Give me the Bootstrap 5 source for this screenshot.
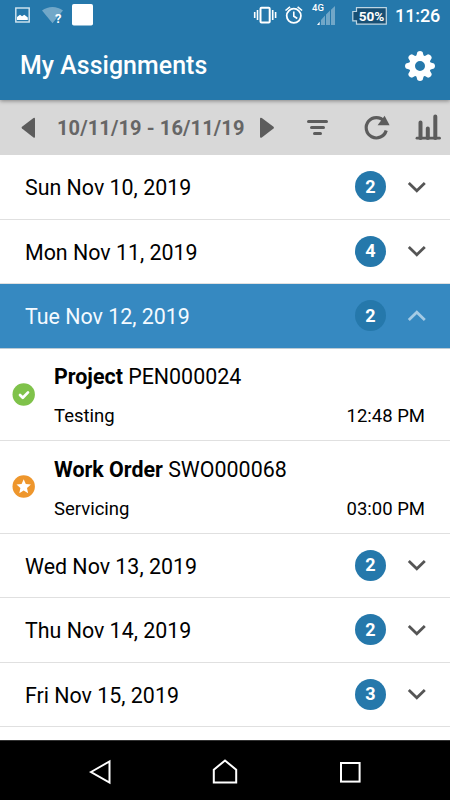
<!DOCTYPE html>
<html lang="en">
<head>
<meta charset="utf-8">
<meta name="viewport" content="width=device-width, initial-scale=1">
<title>My Assignments</title>
<link href="https://cdn.jsdelivr.net/npm/bootstrap@5.3.0/dist/css/bootstrap.min.css" rel="stylesheet">
<style>
body{font-family:Roboto,"Liberation Sans",sans-serif;color:#000;background:#fff;line-height:1}
.screen{width:450px;height:800px}
svg{display:block;flex:none}
.top-area{background:#2578ab;height:100px;z-index:2;box-shadow:0 1px 4px rgba(0,0,0,.4)}
.status{height:31px}
.signal{margin-left:12px}
.battery{font-size:13.6px;letter-spacing:-.1px;width:35px;height:18px;line-height:18px;padding-left:4px}
.battery svg{z-index:-1}
.net-type{font-size:9.5px;left:-4px;top:-1px}
.clock{font-size:18px;width:47px;letter-spacing:-.1px}
.title-bar{height:69px;padding:0 15px 0 20px}
.title-bar h1{font-size:24.9px;line-height:30px;letter-spacing:.05px}
.tools{height:55px;background:#d8d8d8;color:#5c5c5c}
.range{font-size:20px;color:#666;width:190px;letter-spacing:.12px;padding-top:1px}
.day{height:64.5px;padding:0 24px 0 25px;border-bottom:1.5px solid #e0e0e0;font-size:21.4px}
.day .date{padding-top:2px}
.day .count{width:31px;height:31px;background:#2578ab;font-size:18px;margin-right:21px}
.day .chev{color:#555}
.day.open{background:#3689c1;color:#f4faff;border-color:#bccbd5}
.day.open .chev{color:#a5cbe5}
.job{height:92.5px;border-bottom:1.5px solid #e0e0e0;padding:0 25px 0 12px}
.job svg{margin-right:19px}
.job-title{font-size:21.4px;line-height:28px;margin-top:14.6px}
.job-info{font-size:18.5px;line-height:24px;margin-top:13px}
.list-area{height:585px}
.sys-nav{height:60px;background:#000;border-top:1px solid #333}
</style>
<script src="https://cdn.jsdelivr.net/npm/bootstrap@5.3.0/dist/js/bootstrap.bundle.min.js"></script>
</head>
<body>
<div class="screen d-flex flex-column overflow-hidden">
  <header class="top-area position-relative text-white flex-shrink-0">
    <div class="status d-flex align-items-center">
      <svg width="100" height="31" fill="#fff">
        <rect x="15.800" y="8" width="13.400" height="14" fill="none" stroke="#d5e7f1" stroke-width="1.400"/>
        <path d="M17 20v-3l3-2.300 2 1.500 2.300-1.400 3.500 2.600V20z"/>
        <path d="M42 10.500C48 5.700 57 5.700 63 10.500L52.500 23.200z" opacity=".35"/>
        <rect x="72" y="4" width="21" height="21.600" rx="1.800"/>
        <text x="55" y="22.500" font-size="13" font-weight="700">?</text>
      </svg>
      <svg class="ms-auto" width="52" height="31" fill="none" stroke="#fff" stroke-width="1.600">
        <rect x="8.500" y="7.800" width="9.200" height="14.700" rx="1" stroke-width="2"/>
        <path d="M2.700 12v6M5.500 10v10M20.700 10v10M23.600 12v6"/>
        <circle cx="41.800" cy="15.800" r="7.100" stroke-width="1.800"/>
        <path d="M41.800 11.500v4.700l3.500 2.300M33.500 10.500l4.500-3.700M50.100 10.500l-4.500-3.700"/>
      </svg>
      <div class="signal position-relative">
        <svg width="20" height="31" fill="#fff"><path d="M1 25L3.600 21.700V25z"/><path d="M5 25V20l4-4.500V25zM10 25V14.500l4-4V25zM15 25V9.700l4-3.700V25z" opacity=".35"/></svg>
        <span class="net-type position-absolute fw-medium mt-1">4G</span>
      </div>
      <div class="battery position-relative z-1 text-center ms-3 fw-bold">
        <svg class="position-absolute top-0 start-0" width="35" height="18"><path d="M4.500.700h29.800v16.500H4.500v-3.400H.800V4.500h3.700z" fill="#174f74" stroke="#bdd6e4" stroke-width="1.200"/></svg>50%
      </div>
      <div class="clock fw-medium ms-2 me-2">11:26</div>
    </div>
    <div class="title-bar d-flex align-items-center justify-content-between">
      <h1 class="fw-medium mb-0">My Assignments</h1>
      <svg width="30" height="30" viewBox="-15 -15 30 30" fill="#fff">
        <defs><path id="tooth" d="M-4-9L-2.600-14Q0-16 2.600-14L4-9z"/></defs>
        <circle r="8" fill="none" stroke="#fff" stroke-width="6"/>
        <use href="#tooth"/><use href="#tooth" transform="rotate(45)"/><use href="#tooth" transform="rotate(90)"/><use href="#tooth" transform="rotate(135)"/><use href="#tooth" transform="rotate(180)"/><use href="#tooth" transform="rotate(225)"/><use href="#tooth" transform="rotate(270)"/><use href="#tooth" transform="rotate(315)"/>
      </svg>
    </div>
  </header>
  <nav class="tools d-flex align-items-center flex-shrink-0">
    <svg width="57" height="55" fill="currentColor"><path d="M22 26.800Q21 27.700 22 28.600L33.500 37.500Q35 38.500 35 36.500V19Q35 17 33.500 18z"/></svg>
    <div class="range fw-bold text-nowrap">10/11/19 - 16/11/19</div>
    <svg width="203" height="55" fill="none" stroke="currentColor" stroke-linecap="round">
      <path d="M26.500 26.800Q27.500 27.700 26.500 28.600L14.800 37.500Q13 38.500 13 36.500V19Q13 17 14.800 18z" fill="currentColor" stroke="none"/>
      <g stroke-width="3"><path d="M61.500 21.500h18M64.500 27.600h12M67.500 33.500h6"/></g>
      <path d="M137.300 21.300A10.200 10.200 0 1 0 139.200 30.500" stroke-width="3.200" stroke-linecap="butt"/>
      <path d="M137.600 15.800l5 9.400h-12z" fill="currentColor" stroke="none"/>
      <path d="M170 38.200h22.500" stroke-width="2.800"/>
      <path d="M173.500 38V22.500M180.800 38V28.500M188.300 38V16.500" stroke-width="4"/>
    </svg>
  </nav>
  <main class="list-area overflow-hidden flex-shrink-0">
    <div class="day d-flex align-items-center"><span class="date me-auto">Sun Nov 10, 2019</span><span class="count rounded-circle text-white fw-bold d-flex align-items-center justify-content-center">2</span><svg class="chev" width="19" height="12" fill="none" stroke="currentColor" stroke-width="2.800"><path d="M1.800 2L9.800 9.700 17.800 2"/></svg></div>
    <div class="day d-flex align-items-center"><span class="date me-auto">Mon Nov 11, 2019</span><span class="count rounded-circle text-white fw-bold d-flex align-items-center justify-content-center">4</span><svg class="chev" width="19" height="12" fill="none" stroke="currentColor" stroke-width="2.800"><path d="M1.800 2L9.800 9.700 17.800 2"/></svg></div>
    <div class="day open d-flex align-items-center"><span class="date me-auto">Tue Nov 12, 2019</span><span class="count rounded-circle text-white fw-bold d-flex align-items-center justify-content-center">2</span><svg class="chev" width="19" height="12" fill="none" stroke="currentColor" stroke-width="2.800"><path d="M1.800 10L9.800 2.300 17.800 10"/></svg></div>
    <div class="job d-flex align-items-center">
      <svg width="23" height="23"><circle cx="11.700" cy="11.500" r="11.200" fill="#7fc24a"/><path d="M8 12l2.800 2.800 5.200-5.400" fill="none" stroke="#fff" stroke-width="2.700" stroke-linejoin="round" stroke-linecap="round"/></svg>
      <div class="flex-grow-1 align-self-start">
        <div class="job-title"><b>Project</b> PEN000024</div>
        <div class="job-info d-flex justify-content-between"><span>Testing</span><span>12:48 PM</span></div>
      </div>
    </div>
    <div class="job d-flex align-items-center">
      <svg width="23" height="23"><circle cx="11.700" cy="11.500" r="11.200" fill="#ee962c"/><path d="M11.700 4.200l2.100 4.900 5.100.500-3.900 3.500 1.100 5.200-4.400-2.700-4.400 2.700 1.100-5.200-3.900-3.500 5.100-.500z" fill="#fff"/></svg>
      <div class="flex-grow-1 align-self-start">
        <div class="job-title"><b>Work Order</b> SWO000068</div>
        <div class="job-info d-flex justify-content-between"><span>Servicing</span><span>03:00 PM</span></div>
      </div>
    </div>
    <div class="day d-flex align-items-center"><span class="date me-auto">Wed Nov 13, 2019</span><span class="count rounded-circle text-white fw-bold d-flex align-items-center justify-content-center">2</span><svg class="chev" width="19" height="12" fill="none" stroke="currentColor" stroke-width="2.800"><path d="M1.800 2L9.800 9.700 17.800 2"/></svg></div>
    <div class="day d-flex align-items-center"><span class="date me-auto">Thu Nov 14, 2019</span><span class="count rounded-circle text-white fw-bold d-flex align-items-center justify-content-center">2</span><svg class="chev" width="19" height="12" fill="none" stroke="currentColor" stroke-width="2.800"><path d="M1.800 2L9.800 9.700 17.800 2"/></svg></div>
    <div class="day d-flex align-items-center"><span class="date me-auto">Fri Nov 15, 2019</span><span class="count rounded-circle text-white fw-bold d-flex align-items-center justify-content-center">3</span><svg class="chev" width="19" height="12" fill="none" stroke="currentColor" stroke-width="2.800"><path d="M1.800 2L9.800 9.700 17.800 2"/></svg></div>
  </main>
  <footer class="sys-nav flex-shrink-0">
    <svg width="450" height="59" fill="none" stroke="#fff" stroke-width="2">
      <path d="M91 31L109.500 20.500V41.500z"/>
      <path d="M213.800 41.500V28.800L225 19.500 236.200 28.800V41.500z"/>
      <rect x="341" y="22" width="18.600" height="18.600"/>
    </svg>
  </footer>
</div>
</body>
</html>
